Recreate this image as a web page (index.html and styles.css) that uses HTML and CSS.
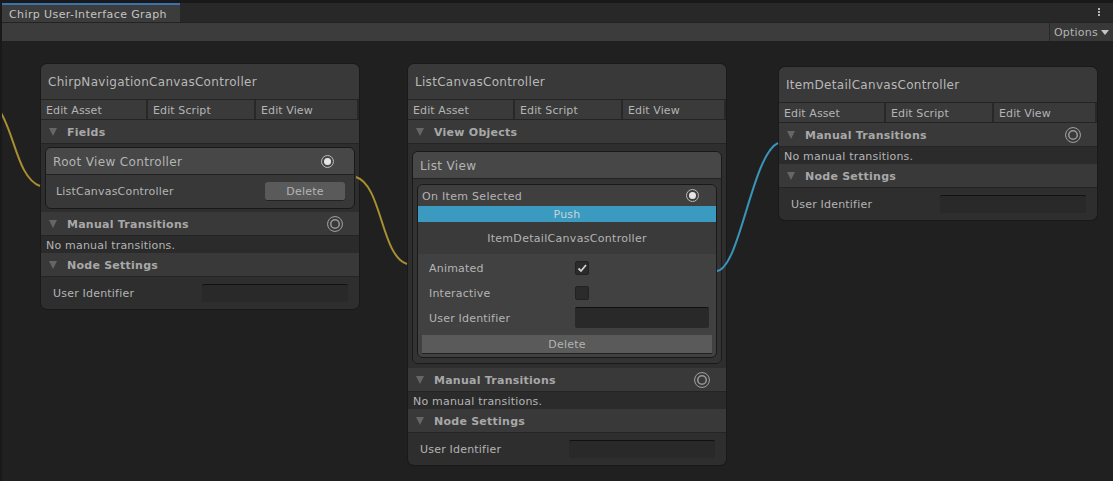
FILE: index.html
```html
<!DOCTYPE html>
<html lang="en">

<head>
    <meta charset="UTF-8">
    <title>Chirp User-Interface Graph</title>
    <link rel="stylesheet" href="styles.css">
</head>

<body>
    <div class="window">
        <div class="tabstrip">
            <div class="tab">Chirp User-Interface Graph</div>
            <div class="kebab"><span></span><span></span><span></span></div>
        </div>
        <div class="toolbar">
            <div class="options">Options<span class="options-arrow"></span></div>
        </div>

        <div class="canvas">
            <div class="node node-nav">
                <div class="node-title">ChirpNavigationCanvasController</div>
                <div class="edit-row">
                    <div class="edit-btn">Edit Asset</div>
                    <div class="edit-btn">Edit Script</div>
                    <div class="edit-btn">Edit View</div>
                </div>
                <div class="section"><span class="tri"></span>Fields</div>
                <div class="section-body">
                    <div class="card">
                        <div class="card-title">Root View Controller<span class="socket"></span></div>
                        <div class="card-row">
                            <span>ListCanvasController</span>
                            <div class="delete-small">Delete</div>
                        </div>
                    </div>
                </div>
                <div class="section"><span class="tri"></span>Manual Transitions<span class="target"></span></div>
                <div class="empty">No manual transitions.</div>
                <div class="section"><span class="tri"></span>Node Settings</div>
                <div class="settings">
                    <span>User Identifier</span>
                    <div class="field"></div>
                </div>
            </div>

            <div class="node node-list">
                <div class="node-title">ListCanvasController</div>
                <div class="edit-row">
                    <div class="edit-btn">Edit Asset</div>
                    <div class="edit-btn">Edit Script</div>
                    <div class="edit-btn">Edit View</div>
                </div>
                <div class="section"><span class="tri"></span>View Objects</div>
                <div class="section-body section-body-list">
                    <div class="card">
                        <div class="card-title">List View</div>
                        <div class="card-inner">
                            <div class="event">
                                <div class="event-head"><span class="event-name">On Item Selected</span><span class="socket"></span></div>
                                <div class="push">Push</div>
                                <div class="event-target">ItemDetailCanvasController</div>
                                <div class="props">
                                    <div class="prop"><span>Animated</span>
                                        <div class="check">
                                            <svg width="14" height="14" viewBox="0 0 14 14">
                                                <path d="M3.5 7.5 L6 10 L11 4" fill="none" stroke="#d0d0d0" stroke-width="1.8" />
                                            </svg>
                                        </div>
                                    </div>
                                    <div class="prop"><span>Interactive</span>
                                        <div class="check"></div>
                                    </div>
                                    <div class="prop prop-field"><span>User Identifier</span>
                                        <div class="field field-wide"></div>
                                    </div>
                                    <div class="delete-wide">Delete</div>
                                </div>
                            </div>
                        </div>
                    </div>
                </div>
                <div class="section"><span class="tri"></span>Manual Transitions<span class="target"></span></div>
                <div class="empty">No manual transitions.</div>
                <div class="section"><span class="tri"></span>Node Settings</div>
                <div class="settings">
                    <span>User Identifier</span>
                    <div class="field"></div>
                </div>
            </div>

            <div class="node node-detail">
                <div class="node-title">ItemDetailCanvasController</div>
                <div class="edit-row">
                    <div class="edit-btn">Edit Asset</div>
                    <div class="edit-btn">Edit Script</div>
                    <div class="edit-btn">Edit View</div>
                </div>
                <div class="section"><span class="tri"></span>Manual Transitions<span class="target"></span></div>
                <div class="empty">No manual transitions.</div>
                <div class="section"><span class="tri"></span>Node Settings</div>
                <div class="settings">
                    <span>User Identifier</span>
                    <div class="field"></div>
                </div>
            </div>

            <svg class="wires" width="1111" height="440" viewBox="2 41 1111 440">
                <path class="wire wire-yellow" d="M0 111 C15 135 18 178 40 186" />
                <path class="wire wire-yellow" d="M356 177 C382 185 381 256 407 264" />
                <path class="wire wire-blue" d="M717 271 C740 268 752 155 778 143" />
            </svg>
        </div>
    </div>
</body>

</html>
```

FILE: styles.css
```css
* {
    box-sizing: border-box;
}

html,
body {
    margin: 0;
    height: 100%;
    overflow: hidden;
}

body {
    background: #191919;
    color: #b4b4b4;
    font-family: "DejaVu Sans", sans-serif;
    font-size: 11px;
    letter-spacing: 0.2px;
}

.window {
    display: flex;
    flex-direction: column;
    height: 481px;
    padding: 3px 0 0 2px;
}

/* top bars */
.tabstrip {
    display: flex;
    justify-content: space-between;
    height: 19px;
    background: #282828;
}

.tab {
    width: 178px;
    padding: 2px 0 0 7px;
    background: #3c3c3c;
    border-top: 2px solid #3a72b0;
    color: #c4c4c4;
    letter-spacing: 0.4px;
    line-height: 15px;
}

.kebab {
    display: flex;
    flex-direction: column;
    gap: 1px;
    width: 15px;
    padding-top: 5px;
}

.kebab span {
    width: 2px;
    height: 2px;
    background: #b4b4b4;
}

.toolbar {
    display: flex;
    justify-content: flex-end;
    height: 19px;
    background: #3c3c3c;
    border-top: 1px solid #232323;
}

.options {
    display: flex;
    align-items: center;
    gap: 3px;
    width: 64px;
    padding-left: 4px;
    background: #383838;
    border-left: 1px solid #282828;
    color: #b4b4b4;
}

.options-arrow {
    width: 0;
    height: 0;
    border-left: 4px solid transparent;
    border-right: 4px solid transparent;
    border-top: 5px solid #c4c4c4;
}

/* graph canvas */
.canvas {
    position: relative;
    flex: 1;
    background: #202020;
}

.wires {
    position: absolute;
    left: 0;
    top: 0;
}

.wire {
    fill: none;
    stroke-width: 2;
}

.wire-yellow {
    stroke: #a88f30;
}

.wire-blue {
    stroke: #3a93b8;
}

.node {
    position: absolute;
    width: 318px;
    background: #2e2e2e;
    border-radius: 6px;
    box-shadow: 0 0 0 1px #191919;
    overflow: hidden;
}

.node-nav {
    left: 39px;
    top: 23px;
}

.node-list {
    left: 406px;
    top: 23px;
}

.node-detail {
    left: 777px;
    top: 26px;
}

.node-title {
    height: 36px;
    padding: 9px 0 0 7px;
    background: #393939;
    border-bottom: 1px solid #242424;
    color: #b8b8b8;
    font-size: 12px;
    letter-spacing: 0.3px;
    line-height: 18px;
}

.edit-row {
    display: flex;
    height: 20px;
    gap: 2px;
    background: #282828;
    border-bottom: 1px solid #242424;
}

.edit-btn {
    flex: none;
    width: 105px;
    padding: 2px 0 0 5px;
    background: #3a3a3a;
    letter-spacing: 0.1px;
    line-height: 18px;
    white-space: nowrap;
}

.edit-btn:nth-child(2) {
    width: 106px;
}

.edit-btn:nth-child(3) {
    width: 101px;
}

.section {
    display: flex;
    align-items: center;
    height: 24px;
    padding-top: 2px;
    background: #393939;
    border-bottom: 1px solid #242424;
    color: #a8a8a8;
    font-weight: bold;
    letter-spacing: 0.25px;
}

.tri {
    width: 0;
    height: 0;
    margin: -2px 10px 0 8px;
    border-left: 4.5px solid transparent;
    border-right: 4.5px solid transparent;
    border-top: 8px solid #666;
}

.section-body {
    padding: 3px 4px;
}

.section-body-list {
    padding: 7px 4px 4px;
}

.card {
    background: #383838;
    border: 1px solid #191919;
    border-radius: 6px;
    overflow: hidden;
}

.card-title {
    display: flex;
    align-items: center;
    justify-content: space-between;
    height: 27px;
    padding: 1px 20px 0 7px;
    background: #474747;
    border-bottom: 1px solid #222;
    font-size: 12px;
    letter-spacing: 0.35px;
}

.card-row {
    display: flex;
    align-items: center;
    justify-content: space-between;
    height: 33px;
    padding: 0 9px 0 10px;
}

.delete-small {
    width: 80px;
    height: 19px;
    margin-top: -1px;
    background: #5a5a5a;
    border-bottom: 1px solid #222;
    border-radius: 3px;
    line-height: 19px;
    text-align: center;
}

.socket {
    flex: none;
    width: 13px;
    height: 13px;
    padding: 2px;
    background: #e6e6e6;
    background-clip: content-box;
    border: 1.5px solid #b8b8b8;
    border-radius: 50%;
}

.target {
    flex: none;
    width: 16px;
    height: 16px;
    margin: -2px 16px 0 auto;
    border: 1.5px solid #999;
    border-radius: 50%;
    box-shadow: inset 0 0 0 2px #393939, inset 0 0 0 3.5px #999;
}

.empty {
    height: 17px;
    padding-left: 5px;
    background: #2b2b2b;
    line-height: 19px;
}

.settings {
    display: flex;
    align-items: center;
    justify-content: space-between;
    height: 32px;
    padding: 0 11px 0 12px;
}

.field {
    width: 146px;
    height: 18px;
    background: #292929;
    border-top: 1px solid #111;
    border-radius: 2px;
}

/* list view card */
.card-inner {
    padding: 5px 4px;
    background: #333;
}

.event {
    background: #3a3a3a;
    border: 1px solid #191919;
    border-radius: 6px;
    overflow: hidden;
}

.event-head {
    display: flex;
    align-items: center;
    justify-content: space-between;
    height: 21px;
    padding: 0 17px 0 4px;
    background: #3f3f3f;
    letter-spacing: 0.3px;
}

.event-name {
    padding-top: 2px;
}

.push {
    height: 16px;
    background: #3a9abf;
    color: #c8d4da;
    line-height: 18px;
    text-align: center;
}

.event-target {
    height: 32px;
    letter-spacing: 0.3px;
    line-height: 34px;
    text-align: center;
}

.props {
    padding: 2px 4px 3px;
    background: #414141;
}

.prop {
    display: flex;
    align-items: center;
    height: 25px;
    padding-left: 7px;
}

.prop span {
    width: 146px;
}

.prop-field {
    height: 23px;
    margin-bottom: 6px;
}

.prop-field span {
    padding-top: 2px;
}

.check {
    width: 14px;
    height: 14px;
    margin-top: -1px;
    background: #2b2b2b;
    border: 1px solid #222;
    border-radius: 2px;
}

.check svg {
    display: block;
    margin: -1px;
}

.field-wide {
    width: 134px;
    height: 21px;
}

.delete-wide {
    height: 19px;
    background: #5a5a5a;
    border-bottom: 1px solid #222;
    line-height: 20px;
    text-align: center;
}
```
